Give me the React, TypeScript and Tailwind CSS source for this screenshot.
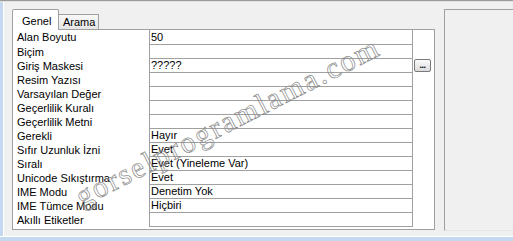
const rows: { label: string; value: string; button?: boolean }[] = [
  { label: "Alan Boyutu", value: "50" },
  { label: "Biçim", value: "" },
  { label: "Giriş Maskesi", value: "?????", button: true },
  { label: "Resim Yazısı", value: "" },
  { label: "Varsayılan Değer", value: "" },
  { label: "Geçerlilik Kuralı", value: "" },
  { label: "Geçerlilik Metni", value: "" },
  { label: "Gerekli", value: "Hayır" },
  { label: "Sıfır Uzunluk İzni", value: "Evet" },
  { label: "Sıralı", value: "Evet (Yineleme Var)" },
  { label: "Unicode Sıkıştırma", value: "Evet" },
  { label: "IME Modu", value: "Denetim Yok" },
  { label: "IME Tümce Modu", value: "Hiçbiri" },
  { label: "Akıllı Etiketler", value: "" },
];

function PropertyRow({ label, value, button, first }: { label: string; value: string; button?: boolean; first: boolean }) {
  return (
    <div className={`flex ${first ? "h-[15px]" : "h-[14px]"}`}>
      <div className="w-[136px] pl-[4px] leading-[14px] whitespace-nowrap">{label}</div>
      <div className={`w-[264px] border-x border-b border-[#a0a0a0] pl-px leading-[13px] whitespace-nowrap ${first ? "pt-px" : ""}`}>
        {value}
      </div>
      {button && (
        <div className="ml-px w-[17px] h-[13px] rounded-[2px] border border-[#7a7a7a] bg-gradient-to-b from-[#fbfbfb] to-[#dcdcdc] flex items-center justify-center text-[9px] font-bold leading-none tracking-[-0.5px]">
          ...
        </div>
      )}
    </div>
  );
}

export default function App() {
  return (
    <div className="relative w-[513px] h-[241px] overflow-hidden bg-[#f0f0f0] flex flex-col text-[11px] text-black font-['Liberation_Sans',Arial,sans-serif]">
      <div className="h-px bg-[#9a9a9a]" />
      <div className="h-px bg-[#e2e2e2]" />
      <div className="flex flex-1">
        <div className="w-[3px] bg-[#c4d9ef]" />
        <div className="w-px bg-white" />
        <div className="ml-[8px] pt-[7px] flex flex-col">
          <div className="flex items-end h-[20px] relative z-10">
            <div className="w-[47px] h-[21px] -mb-px border-x border-t border-[#a0a0a0] bg-white rounded-t-[2px] pl-[9px] pt-[3px]">
              Genel
            </div>
            <div className="w-[40px] h-[15px] border-r border-t border-[#a0a0a0] bg-gradient-to-b from-[#f8f8f8] to-[#e6e6e6] pl-[4px] leading-[15px]">
              Arama
            </div>
          </div>
          <div className="w-[423px] h-[201px] border border-[#a0a0a0] bg-white pt-0">
            {rows.map((r, i) => (
              <PropertyRow key={r.label} label={r.label} value={r.value} button={r.button} first={i === 0} />
            ))}
          </div>
        </div>
        <div className="ml-[9px] mt-[7px] mb-[5px] flex-1 border-l border-t border-[#a0a0a0] border-b border-b-[#e4e4e4] bg-[#f0f0f0]" />
      </div>
      <div className="h-px bg-white" />
      <div className="h-[4px] bg-[#c4d9ef]" />
      <svg className="absolute inset-0 pointer-events-none" width="513" height="241">
        <text
          x="82"
          y="207"
          transform="rotate(-27 82 207)"
          fontFamily="'Liberation Serif', serif"
          fontSize="30"
          textLength="335"
          lengthAdjust="spacing"
          fill="none"
          stroke="#8a8a8a"
          strokeWidth="0.7"
        >
          gorselprogramlama.com
        </text>
      </svg>
    </div>
  );
}
